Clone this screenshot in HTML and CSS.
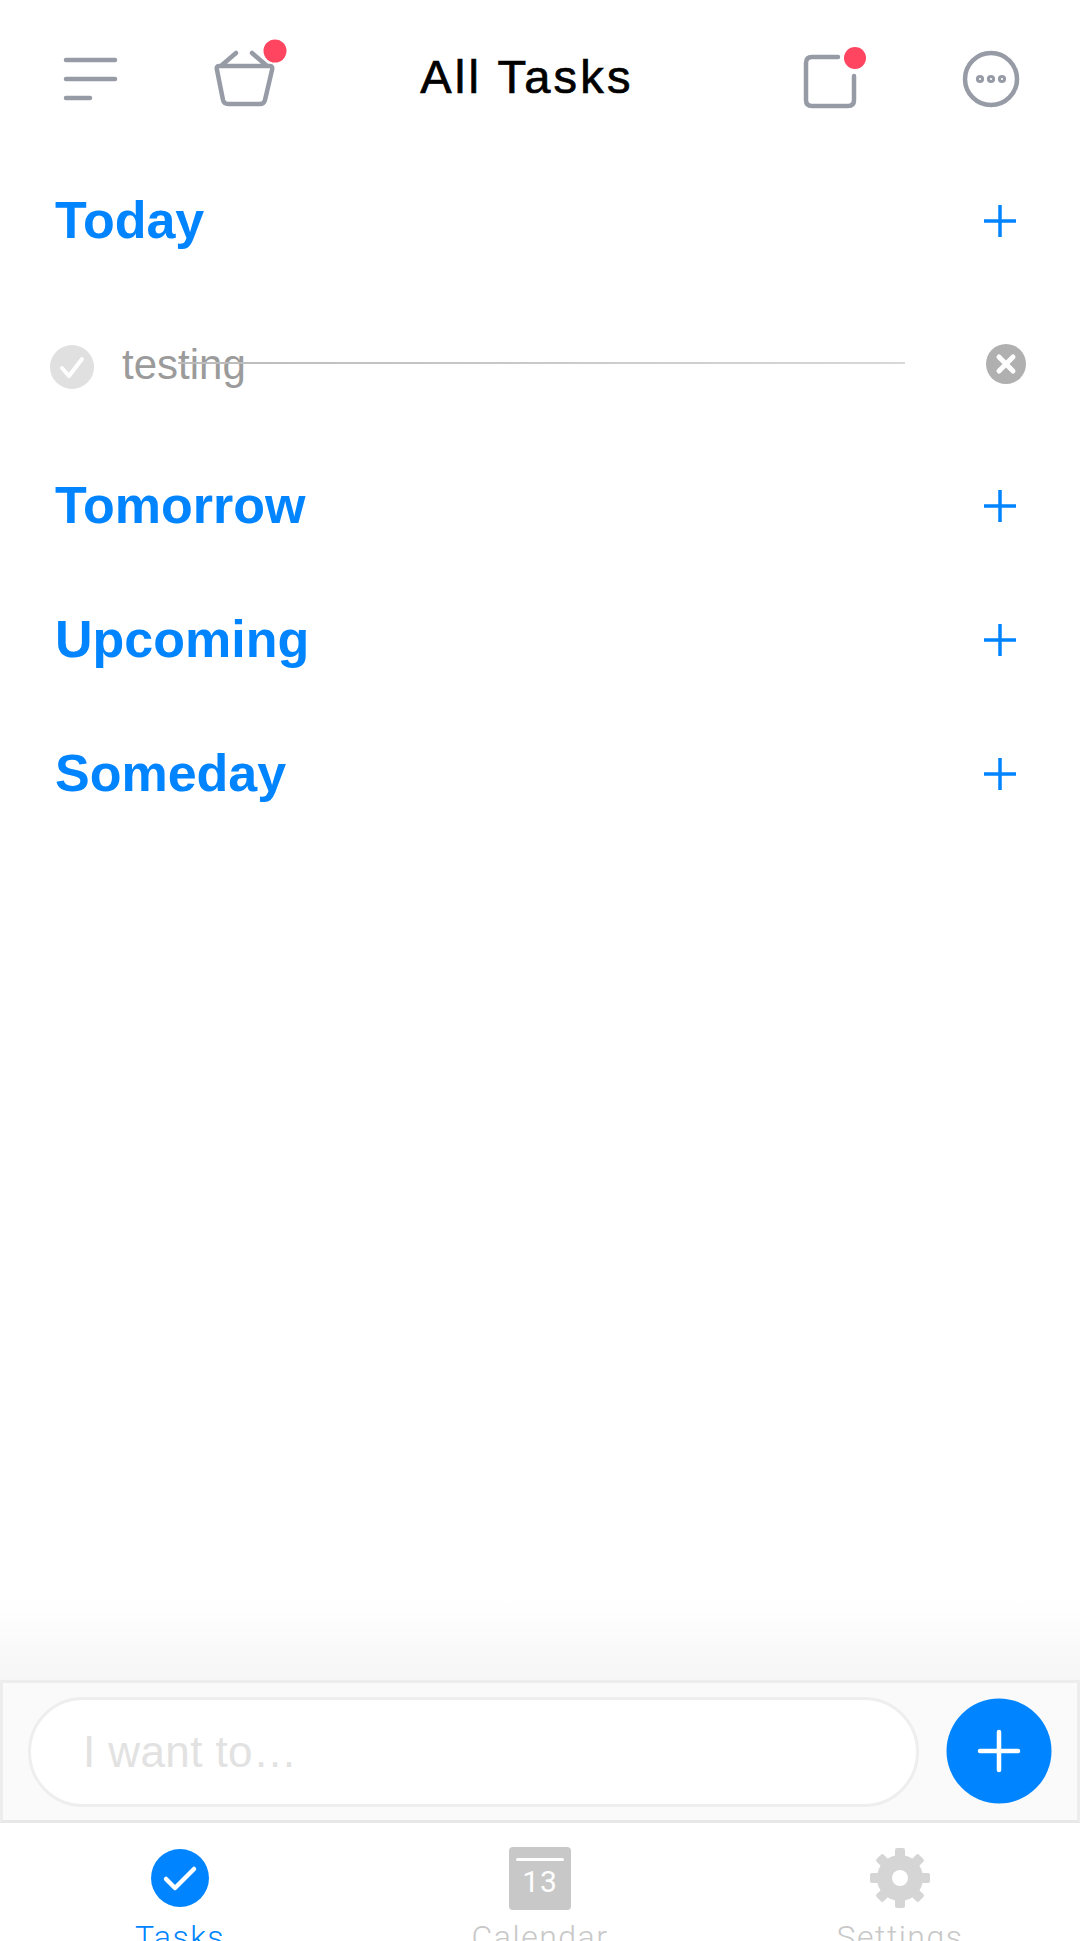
FILE: index.html
```html
<!DOCTYPE html>
<html lang="en">
<head>
    <meta charset="UTF-8">
    <meta name="viewport" content="width=device-width, initial-scale=1.0">
    <title>All Tasks</title>
    <link rel="stylesheet" href="styles.css">
</head>
<body>
    <div class="app">
        <header class="topbar">
            <svg class="slot" viewBox="0 0 100 100">
                <path class="line-icon" d="M26 31H75M26 50H75M26 69H50"/>
            </svg>
            <svg class="slot slot-basket" viewBox="0 0 100 100">
                <path class="line-icon" d="M29 37H80Q83 37 82 41L75 71Q74 75 70 75H38Q34 75 33 71L27 41Q26 37 29 37ZM32 36L46 24M76 36L62 24"/>
                <circle class="dot" cx="85" cy="22" r="11.5"/>
            </svg>
            <h1 class="title">All Tasks</h1>
            <svg class="slot" viewBox="0 0 100 100">
                <path class="line-icon" d="M58 28H32Q26 28 26 34V71Q26 77 32 77H68Q74 77 74 71V47"/>
                <circle class="dot" cx="75" cy="29" r="11"/>
            </svg>
            <svg class="slot slot-more" viewBox="0 0 100 100">
                <circle class="line-icon" cx="50" cy="50" r="26"/>
                <circle class="more-dot" cx="39" cy="50" r="2.6"/>
                <circle class="more-dot" cx="50" cy="50" r="2.6"/>
                <circle class="more-dot" cx="61" cy="50" r="2.6"/>
            </svg>
        </header>

        <main class="lists">
            <div class="section">
                <h2>Today</h2>
                <svg class="add" viewBox="0 0 40 40"><path d="M20 4V36M4 20H36"/></svg>
            </div>
            <div class="task">
                <svg class="task-check" viewBox="0 0 44 44">
                    <circle cx="22" cy="22" r="22"/>
                    <path d="M12 23L19 31L32 14"/>
                </svg>
                <span class="task-name">testing</span>
                <div class="strike"></div>
                <svg class="task-remove" viewBox="0 0 40 40">
                    <circle cx="20" cy="20" r="20"/>
                    <path d="M13 13L27 27M27 13L13 27"/>
                </svg>
            </div>
            <div class="section">
                <h2>Tomorrow</h2>
                <svg class="add" viewBox="0 0 40 40"><path d="M20 4V36M4 20H36"/></svg>
            </div>
            <div class="section">
                <h2>Upcoming</h2>
                <svg class="add" viewBox="0 0 40 40"><path d="M20 4V36M4 20H36"/></svg>
            </div>
            <div class="section">
                <h2>Someday</h2>
                <svg class="add" viewBox="0 0 40 40"><path d="M20 4V36M4 20H36"/></svg>
            </div>
        </main>

        <div class="fade"></div>

        <div class="composer">
            <div class="composer-input">I want to…</div>
            <svg class="composer-add" viewBox="0 0 106 106">
                <circle cx="53" cy="53" r="52.5"/>
                <path d="M34 53H72M53 34V72"/>
            </svg>
        </div>

        <nav class="tabs">
            <div class="tab tab-active">
                <svg class="tab-icon" viewBox="0 0 60 60">
                    <circle cx="30" cy="30" r="29"/>
                    <path d="M16 31L25 40L44 21"/>
                </svg>
                <span>Tasks</span>
            </div>
            <div class="tab">
                <div class="cal">
                    <div class="cal-bar"></div>
                    <div class="cal-day">13</div>
                </div>
                <span>Calendar</span>
            </div>
            <div class="tab">
                <svg class="tab-icon gear" viewBox="0 0 60 60">
                    <circle class="gear-ring" cx="30" cy="30" r="15.5"/>
                    <rect x="25" y="0" width="10" height="60" rx="2"/>
                    <rect x="25" y="0" width="10" height="60" rx="2" transform="rotate(45 30 30)"/>
                    <rect x="25" y="0" width="10" height="60" rx="2" transform="rotate(90 30 30)"/>
                    <rect x="25" y="0" width="10" height="60" rx="2" transform="rotate(135 30 30)"/>
                    <circle class="gear-hole" cx="30" cy="30" r="8"/>
                </svg>
                <span>Settings</span>
            </div>
        </nav>
    </div>
</body>
</html>
```

FILE: styles.css
```css
* {
    box-sizing: border-box;
}
html, body {
    margin: 0;
    height: 100%;
    background: white;
}
body {
    font-family: "Liberation Sans", Arial, sans-serif;
}
.app {
    display: flex;
    flex-direction: column;
    height: 1941px;
    overflow: hidden;
}

/* top bar */
.topbar {
    display: flex;
    align-items: center;
    height: 153px;
    padding: 5px 39px 0 40px;
    flex-shrink: 0;
}
.slot {
    width: 100px;
    height: 100px;
    flex-shrink: 0;
}
.slot-basket {
    margin-left: 50px;
}
.slot-more {
    margin-left: 61px;
}
.title {
    flex: 1;
    margin: -5px 0 0;
    padding-right: 16px;
    text-align: center;
    font-size: 47px;
    font-weight: normal;
    letter-spacing: 3.2px;
    color: #000;
    -webkit-text-stroke: 0.7px #000;
}
.line-icon {
    fill: none;
    stroke: #969ba6;
    stroke-width: 4.5;
    stroke-linecap: round;
    stroke-linejoin: round;
}
.dot {
    fill: #ff4560;
}
.more-dot {
    fill: none;
    stroke: #969ba6;
    stroke-width: 3;
}

/* lists */
.lists {
    flex: 1;
}
.section {
    display: flex;
    align-items: center;
    justify-content: space-between;
    height: 134px;
    padding: 0 60px 0 55px;
}
.section h2 {
    margin: 0;
    font-size: 52px;
    font-weight: bold;
    color: #0084ff;
}
.add {
    width: 40px;
    height: 40px;
    margin-top: 2px;
}
.add path {
    fill: none;
    stroke: #0084ff;
    stroke-width: 3.5;
}
.task {
    position: relative;
    display: flex;
    align-items: center;
    height: 151px;
    padding: 0 54px 0 50px;
}
.task-check {
    width: 44px;
    height: 44px;
    margin-top: 8px;
}
.task-check circle {
    fill: #e0e0e0;
}
.task-check path {
    fill: none;
    stroke: white;
    stroke-width: 4;
    stroke-linecap: round;
    stroke-linejoin: round;
}
.task-name {
    flex: 1;
    margin-left: 28px;
    padding-top: 4px;
    font-size: 42px;
    color: #9b9b9b;
}
.strike {
    position: absolute;
    left: 178px;
    right: 175px;
    top: 75px;
    height: 2px;
    background: linear-gradient(to right, #bbbbbb, #d8d8d8);
}
.task-remove {
    width: 40px;
    height: 40px;
    margin-top: 2px;
}
.task-remove circle {
    fill: #b0b0b0;
}
.task-remove path {
    fill: none;
    stroke: white;
    stroke-width: 5;
    stroke-linecap: round;
}

/* input */
.fade {
    height: 80px;
    flex-shrink: 0;
    background: linear-gradient(to bottom, #fff, #f6f6f6);
}
.composer {
    display: flex;
    align-items: center;
    justify-content: space-between;
    height: 143px;
    padding: 0 25px 0 25px;
    flex-shrink: 0;
    background: #fafafa;
    border: 3px solid #ededed;
    border-bottom-color: #e8e8e8;
}
.composer-input {
    width: 891px;
    height: 110px;
    padding-left: 52px;
    background: white;
    border: 3px solid #eeeeee;
    border-radius: 55px;
    font-size: 44px;
    line-height: 104px;
    letter-spacing: 0.4px;
    color: #e2e2e2;
}
.composer-add {
    width: 106px;
    height: 106px;
    margin-top: -2px;
}
.composer-add circle {
    fill: #0084ff;
}
.composer-add path {
    fill: none;
    stroke: white;
    stroke-width: 4.5;
    stroke-linecap: round;
}

/* tabs */
.tabs {
    display: grid;
    grid-template-columns: 360px 360px 360px;
    height: 118px;
    flex-shrink: 0;
    font-family: Roboto, sans-serif;
    font-size: 32px;
    font-weight: 300;
    letter-spacing: 1.5px;
    color: #c8c8c8;
}
.tab {
    display: flex;
    flex-direction: column;
    align-items: center;
    gap: 10px;
    padding-top: 25px;
    white-space: nowrap;
}
.tab-active {
    color: #0084ff;
}
.tab-icon {
    width: 60px;
    height: 60px;
    flex-shrink: 0;
}
.tab-active circle {
    fill: #0084ff;
}
.tab-active path {
    fill: none;
    stroke: white;
    stroke-width: 4.5;
    stroke-linecap: round;
    stroke-linejoin: round;
}
.gear rect {
    fill: #d5d5d5;
}
.gear-ring {
    fill: none;
    stroke: #d5d5d5;
    stroke-width: 15;
}
.gear-hole {
    fill: white;
}
.cal {
    width: 62px;
    height: 63px;
    flex-shrink: 0;
    margin: -1px 0 -2px;
    padding: 11px 7px 0;
    background: #c8c8c8;
    border-radius: 4px;
    color: white;
    text-align: center;
    letter-spacing: 1px;
}
.cal-bar {
    height: 3px;
    background: white;
    border-radius: 2px;
}
.cal-day {
    font-size: 30px;
    line-height: 42px;
    font-weight: 400;
}
```
